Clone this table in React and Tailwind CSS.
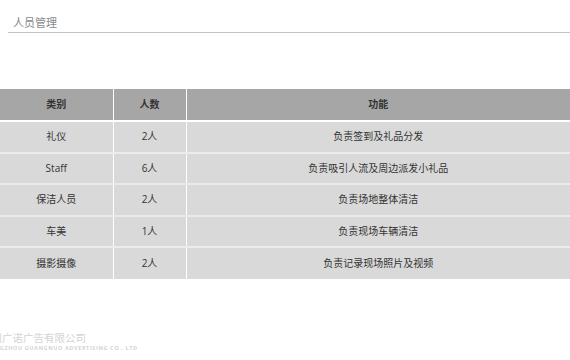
import React from 'react';

const rows = [
  { type: '礼仪', count: '2人', duty: '负责签到及礼品分发' },
  { type: 'Staff', count: '6人', duty: '负责吸引人流及周边派发小礼品' },
  { type: '保洁人员', count: '2人', duty: '负责场地整体清洁' },
  { type: '车美', count: '1人', duty: '负责现场车辆清洁' },
  { type: '摄影摄像', count: '2人', duty: '负责记录现场照片及视频' },
];

const font = { fontFamily: '"Open Sans", "Noto Sans CJK SC", sans-serif' };

const App = () => {
  return (
    <div className="w-[570px] h-[360px] bg-white overflow-hidden flex flex-col" style={font}>
      {/* Title */}
      <div className="ml-[8px] mt-[16px] border-b border-[#c4c4c4] pl-[5px] pb-[3px] text-[11px] leading-[13px] text-[#8a8a8a]">
        人员管理
      </div>

      {/* Table */}
      <table className="mt-[56px] w-full border-collapse text-[10px] text-[#333]">
        <thead>
          <tr className="h-[32px] bg-[#a6a6a6] border-b-2 border-white">
            <th className="w-[113px] font-bold border-r border-white">类别</th>
            <th className="w-[73px] font-bold border-r border-white">人数</th>
            <th className="font-bold">功能</th>
          </tr>
        </thead>
        <tbody>
          {rows.map((r, i) => (
            <tr
              key={r.type}
              className={`h-[31.5px] bg-[#d9d9d9] ${i < rows.length - 1 ? 'border-b-2 border-[#ebebeb]' : ''}`}
            >
              <td className="text-center border-r border-white">{r.type}</td>
              <td className="text-center border-r border-white">{r.count}</td>
              <td className="text-center">{r.duty}</td>
            </tr>
          ))}
        </tbody>
      </table>

      {/* Footer */}
      <div className="mt-[53px] -ml-[19px] flex flex-col text-[#d4d4d4]">
        <span className="text-[10.5px] leading-[12px]">广州广诺广告有限公司</span>
        <span className="text-[5.5px] leading-[8px] font-bold tracking-[0.6px]">GUANGZHOU GUANGNUO ADVERTISING CO., LTD</span>
      </div>
    </div>
  );
};

export default App;
